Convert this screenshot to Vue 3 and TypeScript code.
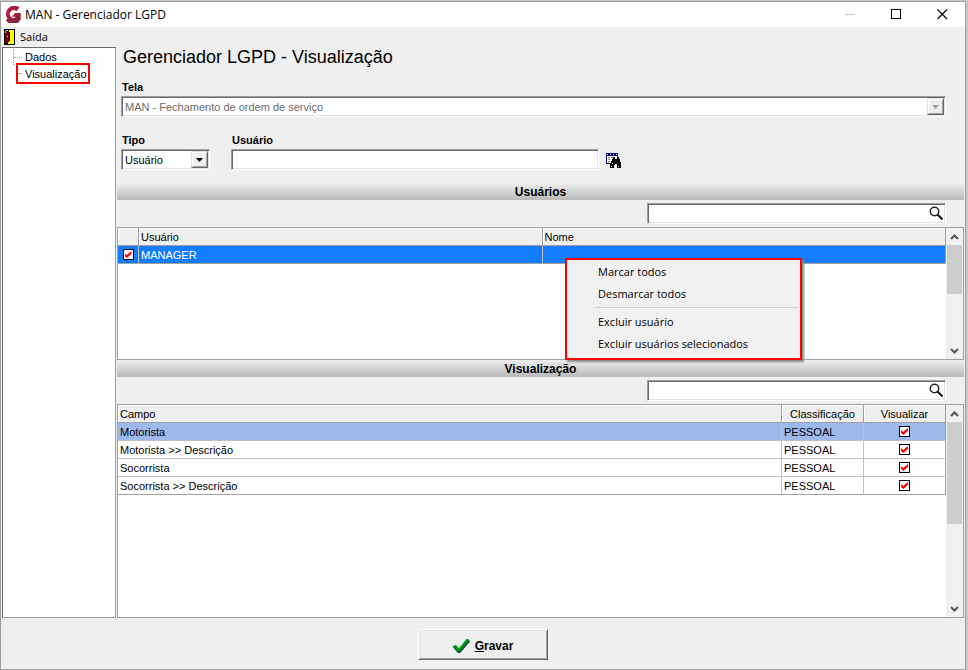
<script setup lang="ts">
import { ref } from 'vue'

interface UserRow {
  checked: boolean
  user: string
  name: string
}

interface FieldRow {
  field: string
  kind: string
  visible: boolean
}

const screen = ref('MAN - Fechamento de ordem de serviço')
const kind = ref('Usuário')
const userCode = ref('')
const userSearch = ref('')
const fieldSearch = ref('')
const selectedField = ref(0)

const users = ref<UserRow[]>([{ checked: true, user: 'MANAGER', name: '' }])

const fields = ref<FieldRow[]>([
  { field: 'Motorista', kind: 'PESSOAL', visible: true },
  { field: 'Motorista >> Descrição', kind: 'PESSOAL', visible: true },
  { field: 'Socorrista', kind: 'PESSOAL', visible: true },
  { field: 'Socorrista >> Descrição', kind: 'PESSOAL', visible: true },
])

function markAll(value: boolean) {
  users.value.forEach((row) => (row.checked = value))
}

function removeChecked() {
  users.value = users.value.filter((row) => !row.checked)
}
</script>

<template>
  <div class="desktop">
    <div class="window">
      <header class="titlebar">
        <svg class="logo" width="17" height="17" viewBox="0 0 17 17" aria-hidden="true">
          <path d="M15.500 1.500 L12.500 5.200 A4 4 0 1 0 11.200 11.800 V10.800 H8 L10.800 7 H16.500 V13.500 A8.300 8.300 0 1 1 15.500 1.500Z" fill="#b01c40" />
          <path d="M16.500 7V13.500A8.300 8.300 0 0 1 2 14.200L5 11A4 4 0 0 0 11.200 11.800L13 7Z" fill="#8a2340" />
        </svg>
        <span class="caption">MAN - Gerenciador LGPD</span>
        <div class="controls">
          <button type="button" class="control" aria-label="Minimizar" disabled>
            <svg width="11" height="11" viewBox="0 0 11 11"><path d="M0 5.500H10" stroke="#c4c4c4" /></svg>
          </button>
          <button type="button" class="control" aria-label="Maximizar">
            <svg width="11" height="11" viewBox="0 0 11 11"><rect x=".5" y=".5" width="9" height="9" fill="none" stroke="#000" /></svg>
          </button>
          <button type="button" class="control" aria-label="Fechar">
            <svg width="11" height="11" viewBox="0 0 11 11"><path d="M.5 .5L10 10M10 .5L.5 10" stroke="#000" stroke-width="1.100" /></svg>
          </button>
        </div>
      </header>

      <nav class="menubar">
        <button type="button" class="menu-button">
          <svg width="11" height="16" viewBox="0 0 11 16" shape-rendering="crispEdges" aria-hidden="true">
            <rect width="11" height="16" fill="#000" />
            <rect x="1" y="1" width="9" height="14" fill="#ff0" />
            <path d="M1 1H5V12L4 13V14L1 15Z" fill="#7b0000" />
            <path d="M2 1H4V2H2ZM1 2H2V4H1Z" fill="#0ff" />
            <path d="M5 3H6V12H5ZM4 8H5V9H4ZM1 14H4V15H1Z" fill="#000" />
            <rect x="3" y="7" width="1" height="1" fill="#ff0" />
          </svg>
          Saída
        </button>
      </nav>

      <div class="body">
        <aside class="sidebar">
          <ul class="tree">
            <li><a href="#dados">Dados</a></li>
            <li class="current"><a href="#visualizacao">Visualização</a></li>
          </ul>
        </aside>

        <main class="content">
          <form class="filters" @submit.prevent>
            <h1>Gerenciador LGPD - Visualização</h1>
            <div class="field">
              <label for="screen">Tela</label>
              <div class="combo">
                <select id="screen" v-model="screen" disabled>
                  <option>MAN - Fechamento de ordem de serviço</option>
                </select>
                <span class="arrow"><svg width="7" height="4" viewBox="0 0 7 4"><path d="M0 0H7L3.500 4Z" fill="#a0a0a0" /></svg></span>
              </div>
            </div>
            <div class="filter-row">
              <div class="field kind">
                <label for="kind">Tipo</label>
                <div class="combo">
                  <select id="kind" v-model="kind">
                    <option>Usuário</option>
                  </select>
                  <span class="arrow"><svg width="7" height="4" viewBox="0 0 7 4"><path d="M0 0H7L3.500 4Z" fill="#000" /></svg></span>
                </div>
              </div>
              <div class="field user">
                <label for="user">Usuário</label>
                <input id="user" v-model="userCode" class="box" type="text" />
              </div>
              <button type="button" class="lookup" aria-label="Pesquisar usuário">
                <svg width="16" height="16" viewBox="0 0 16 16" shape-rendering="crispEdges">
                  <rect width="12" height="11" fill="#000080" />
                  <path d="M1 3H11V10H1Z" fill="#fff" />
                  <path d="M1 1H2V2H1ZM4 1H5V2H4ZM7 1H8V2H7ZM10 1H11V2H10Z" fill="#fff" />
                  <path d="M2 4H4V5H2ZM5 4H7V5H5ZM2 6H4V7H2ZM2 8H4V9H2Z" fill="#808080" />
                  <path d="M7 4H9V6H11V4H13V6H14V9H15V15H11V11H9V12H8V15H4V10H5V8H6V6H7Z" fill="#000" />
                  <path d="M6 10H7V11H6ZM5 13H6V14H5ZM12 13H13V14H12Z" fill="#fff" />
                </svg>
              </button>
            </div>
          </form>

          <section class="users">
            <h2>Usuários</h2>
            <div class="search">
              <input v-model="userSearch" class="box" type="text" aria-label="Pesquisar em usuários" />
              <svg width="15" height="15" viewBox="0 0 15 15" aria-hidden="true">
                <circle cx="5.500" cy="5.500" r="4.200" fill="none" stroke="#222" stroke-width="1.500" />
                <path d="M8.500 8.500L13.500 13.500" stroke="#111" stroke-width="2" />
              </svg>
            </div>
            <div class="grid">
              <div class="grid-view">
                <table>
                  <colgroup><col class="col-mark" /><col /><col /></colgroup>
                  <thead>
                    <tr><th></th><th>Usuário</th><th>Nome</th></tr>
                  </thead>
                  <tbody>
                    <tr v-for="row in users" :key="row.user" class="active">
                      <td class="center"><input v-model="row.checked" class="check" type="checkbox" :aria-label="row.user" /></td>
                      <td>{{ row.user }}</td>
                      <td>{{ row.name }}</td>
                    </tr>
                  </tbody>
                </table>
              </div>
              <div class="scrollbar">
                <svg width="9" height="6" viewBox="0 0 9 6"><path d="M1 5L4.500 1.500L8 5" fill="none" stroke="#555" stroke-width="2" /></svg>
                <span class="thumb short"></span>
                <svg width="9" height="6" viewBox="0 0 9 6"><path d="M1 1L4.500 4.500L8 1" fill="none" stroke="#555" stroke-width="2" /></svg>
              </div>
              <div class="popup" role="menu">
                <button type="button" role="menuitem" @click="markAll(true)">Marcar todos</button>
                <button type="button" role="menuitem" @click="markAll(false)">Desmarcar todos</button>
                <hr />
                <button type="button" role="menuitem">Excluir usuário</button>
                <button type="button" role="menuitem" @click="removeChecked">Excluir usuários selecionados</button>
              </div>
            </div>
          </section>

          <section class="fields">
            <h2>Visualização</h2>
            <div class="search">
              <input v-model="fieldSearch" class="box" type="text" aria-label="Pesquisar em visualização" />
              <svg width="15" height="15" viewBox="0 0 15 15" aria-hidden="true">
                <circle cx="5.500" cy="5.500" r="4.200" fill="none" stroke="#222" stroke-width="1.500" />
                <path d="M8.500 8.500L13.500 13.500" stroke="#111" stroke-width="2" />
              </svg>
            </div>
            <div class="grid">
              <div class="grid-view">
                <table>
                  <colgroup><col /><col class="col-kind" /><col class="col-kind" /></colgroup>
                  <thead>
                    <tr><th>Campo</th><th class="center">Classificação</th><th class="center">Visualizar</th></tr>
                  </thead>
                  <tbody>
                    <tr
                      v-for="(row, index) in fields"
                      :key="row.field"
                      :class="{ picked: index === selectedField }"
                      @click="selectedField = index"
                    >
                      <td>{{ row.field }}</td>
                      <td>{{ row.kind }}</td>
                      <td class="center"><input v-model="row.visible" class="check" type="checkbox" :aria-label="row.field" /></td>
                    </tr>
                  </tbody>
                </table>
              </div>
              <div class="scrollbar">
                <svg width="9" height="6" viewBox="0 0 9 6"><path d="M1 5L4.500 1.500L8 5" fill="none" stroke="#555" stroke-width="2" /></svg>
                <span class="thumb"></span>
                <svg width="9" height="6" viewBox="0 0 9 6"><path d="M1 1L4.500 4.500L8 1" fill="none" stroke="#555" stroke-width="2" /></svg>
              </div>
            </div>
          </section>
        </main>
      </div>

      <footer class="footer">
        <button type="button" class="save">
          <svg width="17" height="16" viewBox="0 0 17 16" aria-hidden="true">
            <path d="M1 9L3 8L6 11.500L14 1.500L16.500 2.500V4L7 15H5L1 10.500Z" fill="#000080" />
            <path d="M0 8L3 7L6 10.500L13.500 1L16 1.500V3.500L6.500 14.500H5L0 9.500Z" fill="#008a08" />
            <path d="M1 8L3 7.500L6 11L13.500 1.500" fill="none" stroke="#10c020" />
          </svg>
          <span><u>G</u>ravar</span>
        </button>
      </footer>
    </div>
  </div>
</template>

<style>
body {
  background: #c8c8c8;
}
</style>

<style scoped>
* {
  box-sizing: border-box;
}

.desktop {
  min-height: 100vh;
  padding: 1px 2px 0 0;
  display: flex;
  font: 11px/16px "Liberation Sans", Arial, sans-serif;
  color: #000;
}

button,
input,
select {
  font: inherit;
  color: inherit;
  margin: 0;
  padding: 0;
  border: 0;
  border-radius: 0;
  background: none;
}

svg {
  display: block;
}

.window {
  flex: 1;
  min-width: 0;
  display: flex;
  flex-direction: column;
  border: 1px solid #a0a0a0;
  background: #efefef;
}

.titlebar {
  height: 25px;
  display: flex;
  align-items: center;
  gap: 4px;
  padding-left: 3px;
  background: #fff;
}

.caption,
.menubar,
.popup {
  font-family: "Open Sans", "Noto Sans", sans-serif;
}

.caption {
  font-size: 12px;
}

.controls {
  margin-left: auto;
  display: flex;
}

.control {
  width: 46px;
  height: 25px;
  display: grid;
  place-items: center;
}

.menubar {
  height: 20px;
  padding-left: 3px;
}

.menu-button {
  height: 19px;
  display: flex;
  align-items: center;
  gap: 5px;
}

.body {
  flex: 1;
  display: flex;
  gap: 1px;
  padding: 0 1px;
}

.sidebar {
  width: 114px;
  border: 1px solid #a0a0a0;
  border-top-color: #696969;
  border-left-color: #696969;
  background: #fff;
}

.tree {
  list-style: none;
  margin: 9px 0 0 10px;
  padding: 0;
  height: 16px;
  border-left: 1px dotted #a0a0a0;
}

.tree li {
  height: 16px;
  margin-top: -8px;
  margin-bottom: 8px;
  display: flex;
  align-items: center;
}

.tree li::before {
  content: "";
  width: 8px;
  border-top: 1px dotted #a0a0a0;
}

.tree li + li {
  margin-bottom: 0;
}

.tree a {
  padding-left: 3px;
  color: inherit;
  text-decoration: none;
}

.tree .current {
  width: 70px;
  height: 17px;
  margin-left: 4px;
  outline: 2px solid #f00;
}

.tree .current::before {
  width: 4px;
}

.content {
  flex: 1;
  min-width: 0;
  display: flex;
  flex-direction: column;
}

.filters {
  padding: 0 18px 0 4px;
}

h1 {
  margin: 0 0 10px 2px;
  font-size: 18px;
  font-weight: 400;
  line-height: 21px;
}

.field {
  display: flex;
  flex-direction: column;
}

.field label {
  padding-left: 1px;
  font-weight: 700;
  line-height: 18px;
}

.combo,
.box {
  height: 21px;
  border: 1px solid;
  border-color: #a0a0a0 #fff #fff #a0a0a0;
  background: #fff;
  box-shadow: inset 1px 1px #696969, inset -1px -1px #e3e3e3;
}

.combo {
  display: grid;
  padding: 1px;
}

.combo select {
  grid-area: 1 / 1;
  appearance: none;
  width: 100%;
  padding-left: 2px;
}

.combo select:disabled {
  color: #6d6d6d;
  opacity: 1;
}

.arrow {
  grid-area: 1 / 1;
  justify-self: end;
  width: 17px;
  display: grid;
  place-items: center;
  border: 1px solid;
  border-color: #e3e3e3 #696969 #696969 #e3e3e3;
  box-shadow: inset 1px 1px #fff, inset -1px -1px #a0a0a0;
  background: #efefef;
  pointer-events: none;
}

.filter-row {
  display: flex;
  align-items: flex-end;
  margin: 14px 0 13px;
}

.kind {
  width: 89px;
  margin-right: 21px;
}

.user {
  width: 368px;
  margin-right: 7px;
}

.lookup {
  margin-bottom: 1px;
}

section {
  display: flex;
  flex-direction: column;
}

.users {
  height: 177px;
}

.fields {
  flex: 1;
}

h2 {
  margin: 0;
  height: 17px;
  font-size: 12px;
  font-weight: 700;
  line-height: 18px;
  text-align: center;
  background: linear-gradient(#efefef, #b9b9b9);
}

.search {
  display: grid;
  align-items: center;
  justify-content: end;
  padding: 3px 18px 3px 0;
}

.search .box {
  grid-area: 1 / 1;
  width: 299px;
  padding: 0 22px 0 4px;
}

.search svg {
  grid-area: 1 / 1;
  justify-self: end;
  margin-right: 2px;
}

.grid {
  position: relative;
  flex: 1;
  display: flex;
  border: 1px solid #a0a0a0;
  background: #fff;
}

.grid-view {
  flex: 1;
  min-width: 0;
}

table {
  width: 100%;
  table-layout: fixed;
  border-collapse: separate;
  border-spacing: 0;
}

.col-mark {
  width: 21px;
}

.col-kind {
  width: 82px;
}

th,
td {
  height: 18px;
  padding: 0 2px;
  border: 0 solid #c0c0c0;
  border-width: 0 1px 1px 0;
  font-weight: 400;
  line-height: 16px;
  text-align: left;
  white-space: nowrap;
}

th {
  border-color: #a0a0a0;
  background: #efefef;
  box-shadow: inset 1px 1px #fff;
}

tr > :last-child {
  border-right-color: #a0a0a0;
}

tr:last-child td {
  border-bottom-color: #a0a0a0;
}

.center {
  padding: 0;
  text-align: center;
}

.active {
  color: #fff;
  background: #127eff;
}

.picked {
  background: #9db8eb;
}

.check {
  appearance: none;
  display: block;
  width: 11px;
  height: 11px;
  margin: 0 auto;
  border: 1px solid #000;
  background: #fff;
}

.check:checked::before {
  content: "";
  display: block;
  width: 7px;
  height: 7px;
  margin: 1px;
  background: #f00;
  clip-path: polygon(0 30%, 30% 58%, 100% 0, 100% 40%, 35% 100%, 0 70%);
}

.scrollbar {
  width: 17px;
  display: flex;
  flex-direction: column;
  align-items: center;
  padding: 6px 0 5px;
  background: #f0f0f0;
}

.thumb {
  width: 15px;
  height: 102px;
  margin: 5px 0 auto;
  background: #cdcdcd;
}

.thumb.short {
  height: 49px;
}

.popup {
  position: absolute;
  left: 447px;
  top: 30px;
  width: 237px;
  padding: 1px 0 3px;
  border: 2px solid #f00;
  background: #f1f1f1;
  box-shadow: 2px 2px 2px #888;
}

.popup button {
  display: block;
  width: 100%;
  height: 22px;
  padding-left: 31px;
  text-align: left;
}

.popup hr {
  margin: 2px 2px 3px 28px;
  border: 0;
  border-top: 1px solid #d0d0d0;
}

.footer {
  height: 51px;
  display: flex;
  justify-content: center;
  align-items: center;
  padding-top: 2px;
}

.save {
  width: 130px;
  height: 31px;
  display: flex;
  align-items: center;
  justify-content: center;
  gap: 5px;
  padding-top: 2px;
  border: 1px solid;
  border-color: #fff #696969 #696969 #fff;
  box-shadow: inset 1px 1px #e3e3e3, inset -1px -1px #a0a0a0;
  font-size: 12px;
  font-weight: 700;
}
</style>
